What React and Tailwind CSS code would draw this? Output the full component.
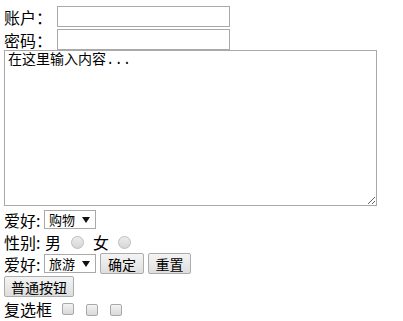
import React from "react";

const font = { fontFamily: '"Noto Sans CJK SC", "Noto Sans", sans-serif' };

function FakeSelect({ value }) {
  return (
    <div className="flex items-center h-[19px] w-[52px] border border-[#a9a9a9] bg-white pl-[4px] text-[13px] leading-none text-black">
      <span>{value}</span>
      <svg width="8" height="6" viewBox="0 0 8 6" className="ml-auto mr-[5px]">
        <path d="M0 0 L8 0 L4 6 Z" fill="#111" />
      </svg>
    </div>
  );
}

function Btn({ children, w }) {
  return (
    <button
      className={`flex items-center justify-center h-[21px] ${w} border border-[#acacac] rounded-[2px] bg-gradient-to-b from-[#f4f4f4] to-[#dedede] text-[14px] leading-none text-black`}
    >
      {children}
    </button>
  );
}

function Radio() {
  return (
    <span className="inline-block w-[13px] h-[13px] rounded-full border border-[#bdbdbd] bg-gradient-to-b from-[#ececec] to-[#d6d6d6]" />
  );
}

function Check() {
  return (
    <span className="inline-block w-[12px] h-[12px] rounded-[2px] border border-[#a8a8a8] bg-gradient-to-b from-[#f3f3f3] to-[#d9d9d9]" />
  );
}

export default function App() {
  return (
    <div className="w-[403px] h-[321px] bg-white text-black pl-[4px] overflow-hidden" style={font}>
      <div className="flex items-center h-[21px] mt-[6px] text-[16px] leading-none">
        <span className="w-[53px]">账户：</span>
        <input className="w-[173px] h-[21px] border border-[#a9a9a9] bg-white outline-none" />
      </div>
      <div className="flex items-center h-[21px] mt-[2px] text-[16px] leading-none">
        <span className="w-[53px]">密码：</span>
        <input type="password" className="w-[173px] h-[21px] border border-[#a9a9a9] bg-white outline-none" />
      </div>
      <textarea
        className="block w-[373px] h-[156px] border border-[#a9a9a9] bg-white outline-none px-[3px] py-[1px] text-[14px] leading-[17px]"
        style={{ fontFamily: '"Liberation Mono", "Noto Sans CJK SC", monospace' }}
        defaultValue="在这里输入内容..."
      />
      <div className="flex items-center h-[19px] mt-[4px] text-[16px] leading-none">
        <span className="w-[40px]">爱好:</span>
        <FakeSelect value="购物" />
      </div>
      <div className="flex items-center h-[23px] mt-[1px] text-[16px] leading-none">
        <span className="w-[41px]">性别:</span>
        <span>男</span>
        <span className="ml-[10px]"><Radio /></span>
        <span className="ml-[9px]">女</span>
        <span className="ml-[9px]"><Radio /></span>
      </div>
      <div className="flex items-center h-[21px] text-[16px] leading-none">
        <span className="w-[40px]">爱好:</span>
        <FakeSelect value="旅游" />
        <div className="ml-[4px]"><Btn w="w-[44px]">确定</Btn></div>
        <div className="ml-[4px]"><Btn w="w-[43px]">重置</Btn></div>
      </div>
      <div className="flex items-center h-[21px] mt-[2px]">
        <Btn w="w-[70px]">普通按钮</Btn>
      </div>
      <div className="flex items-center h-[21px] mt-[1px] text-[16px] leading-none">
        <span className="w-[58px]">复选框</span>
        <Check />
        <span className="ml-[12px]"><Check /></span>
        <span className="ml-[12px]"><Check /></span>
      </div>
    </div>
  );
}
